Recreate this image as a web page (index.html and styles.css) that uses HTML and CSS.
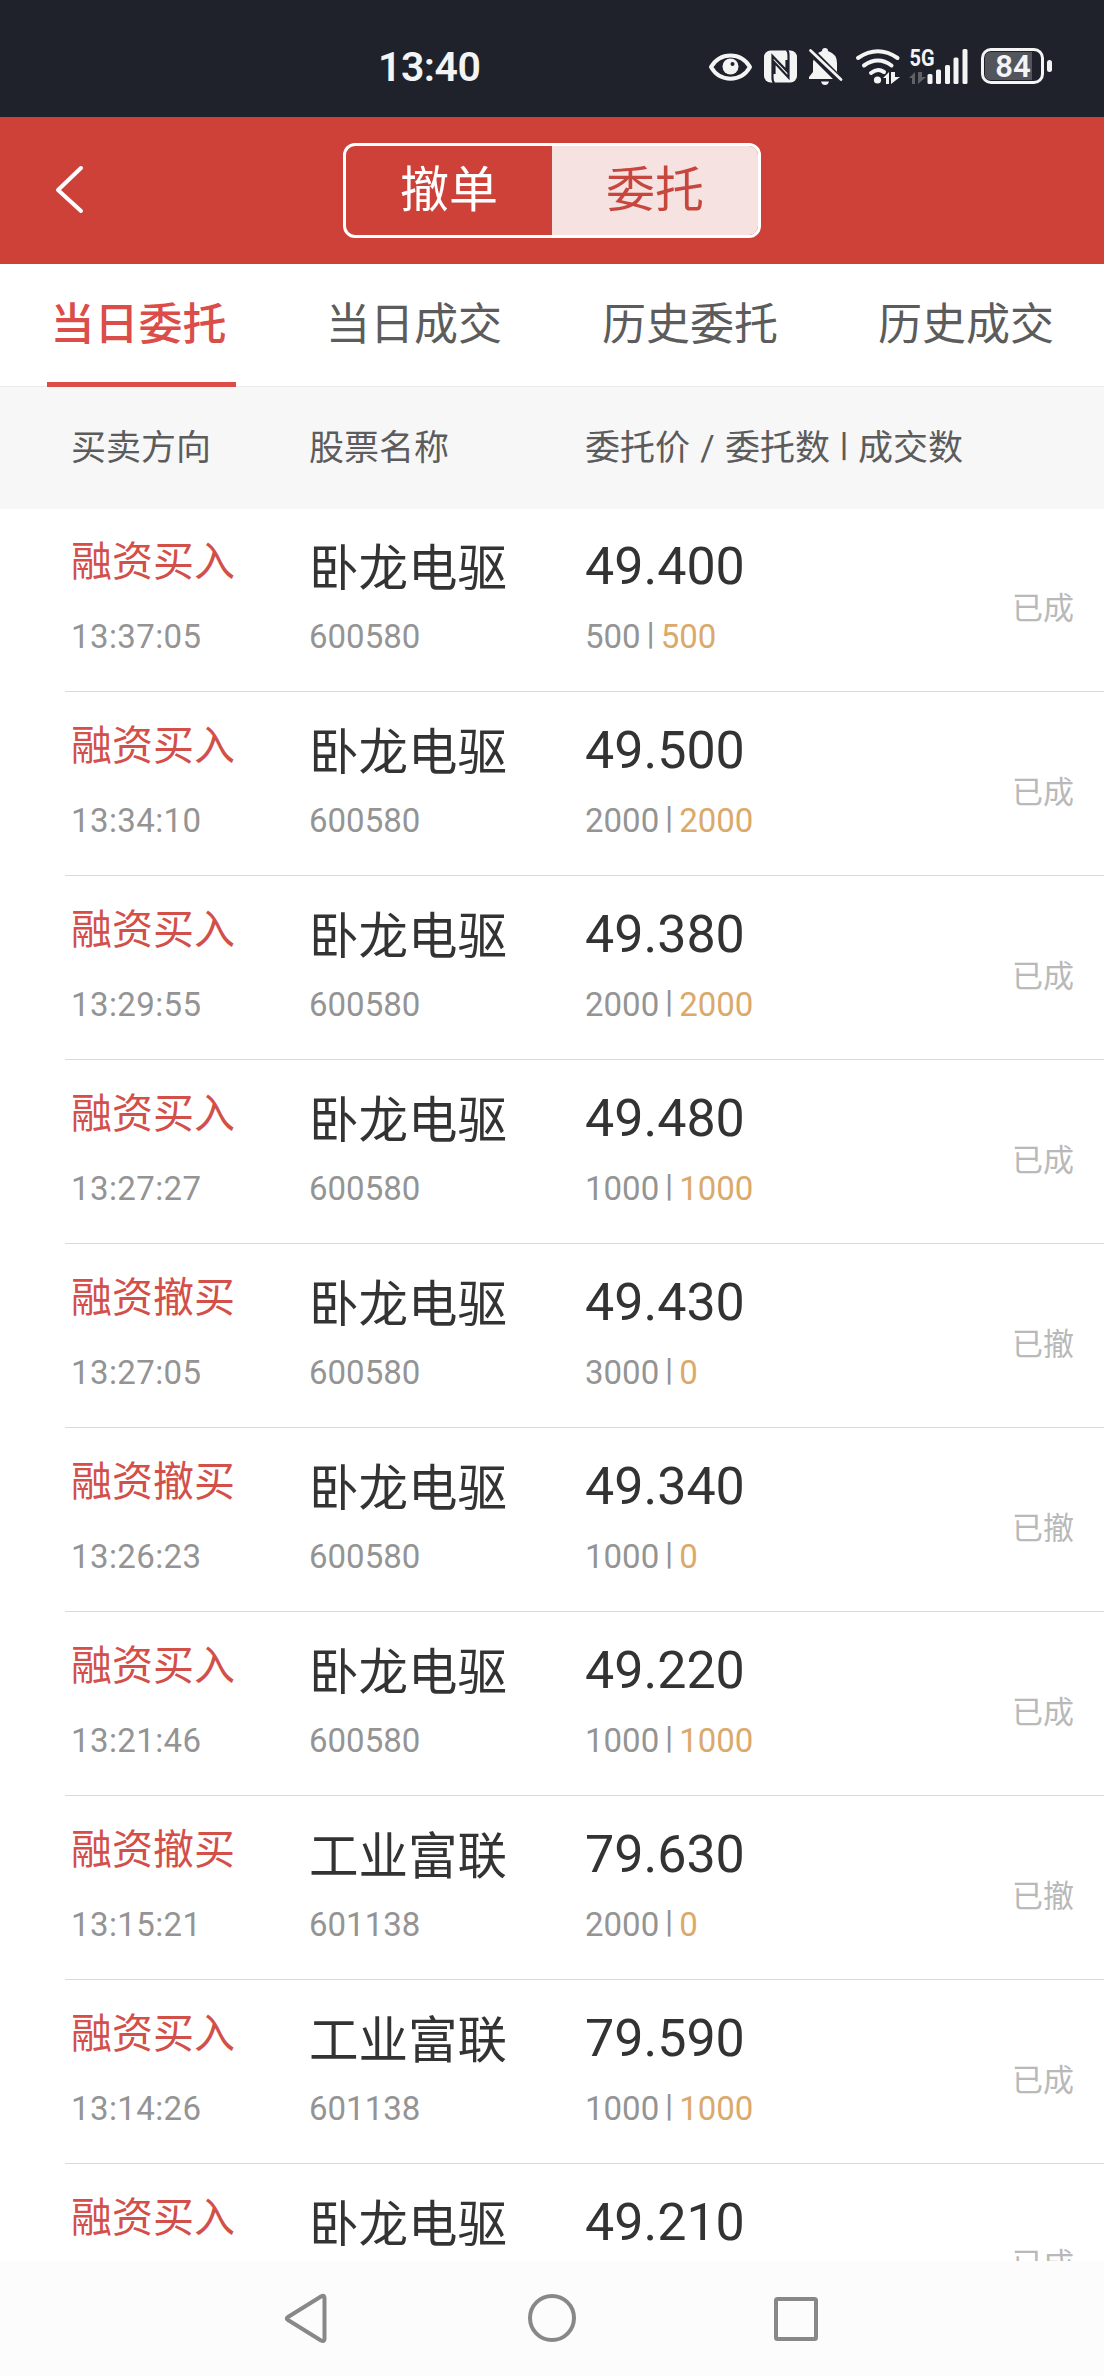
FILE: index.html
```html
<!DOCTYPE html>
<html lang="zh-CN">
<head>
  <meta charset="utf-8">
  <title>当日委托</title>
  <link rel="stylesheet" href="styles.css">
</head>

<body>

<div class="statusBar">
  <div class="clock">13:40</div>
  <div class="statusIcons">
    <svg class="eyeIcon" width="43" height="38" viewBox="0 0 43 38">
      <path d="M2 19C11 3.500 32 3.500 41 19C32 34.500 11 34.500 2 19Z" fill="none" stroke="#f4f4f5" stroke-width="4" stroke-linejoin="round"/>
      <circle cx="21.500" cy="18.500" r="8" fill="#f4f4f5"/>
      <circle cx="23.500" cy="16" r="2" fill="#1f222b"/>
    </svg>
    <svg class="nfcIcon" width="33" height="38" viewBox="0 0 33 38">
      <rect x="0" y="2.500" width="33" height="32" rx="6.500" fill="#f4f4f5"/>
      <path d="M8.500 31V8L22.500 22.500V12M10.500 35Q8.500 34 8.500 30M22.500 2Q24.500 3 24.500 7V29.500L10.500 14.500V26" fill="none" stroke="#1f222b" stroke-width="2.200"/>
    </svg>
    <svg class="bellIcon" width="34" height="38" viewBox="0 0 34 38">
      <path d="M13 3Q13 0 16 0Q19 0 19 3Q28 6 28 15V24L32 30V31H0V29L4 24V14Q5 6 13 3Z" fill="#f4f4f5"/>
      <path d="M12 33.500H20Q19 37 16 37Q13 37 12 33.500Z" fill="#f4f4f5"/>
      <path d="M0 1.500L33 34.500" stroke="#1f222b" stroke-width="8"/>
      <path d="M1.500 2.500L32 31.500" stroke="#f4f4f5" stroke-width="2.800" stroke-linecap="round"/>
    </svg>
    <svg class="wifiIcon" width="44" height="38" viewBox="0 0 44 38">
      <g fill="none" stroke="#f4f4f5" stroke-width="4" stroke-linecap="round">
        <path d="M2 10Q22 -3.500 41.500 10"/>
        <path d="M8 17.500Q22 7.500 35.500 17.500"/>
        <path d="M15 25Q21.500 19.500 28 24"/>
      </g>
      <circle cx="21.500" cy="32" r="3.600" fill="#f4f4f5"/>
      <path d="M27 30L33 24V36H30V30ZM35 24V36L44 29H39V24Z" fill="#f4f4f5"/>
    </svg>
    <svg class="signalIcon" width="59" height="38" viewBox="0 0 59 38">
      <text class="netText" x="0.500" y="18" textLength="25" lengthAdjust="spacingAndGlyphs">5G</text>
      <path d="M0 30L6 24V36H3V30ZM9 24V36L17 29H13V24Z" fill="#5f6167"/>
      <g fill="#f4f4f5">
        <rect x="18.500" y="26" width="5" height="10" rx="1.500"/>
        <rect x="27" y="21.500" width="5" height="14.500" rx="1.500"/>
        <rect x="36" y="17" width="5" height="19" rx="1.500"/>
        <rect x="44.500" y="9.500" width="5" height="26.500" rx="1.500"/>
        <rect x="53.500" y="1" width="5" height="35" rx="1.500"/>
      </g>
    </svg>
    <svg class="batteryIcon" width="71" height="38" viewBox="0 0 71 38">
      <rect x="1.500" y="1.500" width="60" height="33" rx="8.500" fill="none" stroke="#f4f4f5" stroke-width="3"/>
      <path d="M10 4H51V32H10Q4 32 4 26V10Q4 4 10 4Z" fill="#53555c"/>
      <rect x="66" y="12" width="5" height="12" rx="2.500" fill="#f4f4f5"/>
      <text class="batteryText" x="32" y="29" text-anchor="middle">84</text>
    </svg>
  </div>
</div>

<div class="topBar">
  <svg class="backIcon" width="32" height="50" viewBox="0 0 32 50">
    <path d="M27 4L4 26L27 47" fill="none" stroke="#fff" stroke-width="4" stroke-linecap="round" stroke-linejoin="round"/>
  </svg>
  <div class="switch">
    <div class="switchItem">撤单</div>
    <div class="switchItem switchOn">委托</div>
  </div>
</div>

<div class="tabs">
  <div class="tab tabOn">当日委托</div>
  <div class="tab">当日成交</div>
  <div class="tab">历史委托</div>
  <div class="tab">历史成交</div>
</div>

<div class="listHead">
  <div>买卖方向</div>
  <div>股票名称</div>
  <div>委托价<span class="slash">/</span>委托数<span class="headBar">|</span>成交数</div>
</div>

<div class="list">
  <div class="row">
    <div class="cell side"><p>融资买入</p><p class="sub">13:37:05</p></div>
    <div class="cell stock"><p>卧龙电驱</p><p class="sub">600580</p></div>
    <div class="cell price"><p>49.400</p><p class="sub">500<span class="bar">|</span><span class="done">500</span></p></div>
    <div class="state">已成</div>
  </div>
  <div class="row">
    <div class="cell side"><p>融资买入</p><p class="sub">13:34:10</p></div>
    <div class="cell stock"><p>卧龙电驱</p><p class="sub">600580</p></div>
    <div class="cell price"><p>49.500</p><p class="sub">2000<span class="bar">|</span><span class="done">2000</span></p></div>
    <div class="state">已成</div>
  </div>
  <div class="row">
    <div class="cell side"><p>融资买入</p><p class="sub">13:29:55</p></div>
    <div class="cell stock"><p>卧龙电驱</p><p class="sub">600580</p></div>
    <div class="cell price"><p>49.380</p><p class="sub">2000<span class="bar">|</span><span class="done">2000</span></p></div>
    <div class="state">已成</div>
  </div>
  <div class="row">
    <div class="cell side"><p>融资买入</p><p class="sub">13:27:27</p></div>
    <div class="cell stock"><p>卧龙电驱</p><p class="sub">600580</p></div>
    <div class="cell price"><p>49.480</p><p class="sub">1000<span class="bar">|</span><span class="done">1000</span></p></div>
    <div class="state">已成</div>
  </div>
  <div class="row">
    <div class="cell side"><p>融资撤买</p><p class="sub">13:27:05</p></div>
    <div class="cell stock"><p>卧龙电驱</p><p class="sub">600580</p></div>
    <div class="cell price"><p>49.430</p><p class="sub">3000<span class="bar">|</span><span class="done">0</span></p></div>
    <div class="state">已撤</div>
  </div>
  <div class="row">
    <div class="cell side"><p>融资撤买</p><p class="sub">13:26:23</p></div>
    <div class="cell stock"><p>卧龙电驱</p><p class="sub">600580</p></div>
    <div class="cell price"><p>49.340</p><p class="sub">1000<span class="bar">|</span><span class="done">0</span></p></div>
    <div class="state">已撤</div>
  </div>
  <div class="row">
    <div class="cell side"><p>融资买入</p><p class="sub">13:21:46</p></div>
    <div class="cell stock"><p>卧龙电驱</p><p class="sub">600580</p></div>
    <div class="cell price"><p>49.220</p><p class="sub">1000<span class="bar">|</span><span class="done">1000</span></p></div>
    <div class="state">已成</div>
  </div>
  <div class="row">
    <div class="cell side"><p>融资撤买</p><p class="sub">13:15:21</p></div>
    <div class="cell stock"><p>工业富联</p><p class="sub">601138</p></div>
    <div class="cell price"><p>79.630</p><p class="sub">2000<span class="bar">|</span><span class="done">0</span></p></div>
    <div class="state">已撤</div>
  </div>
  <div class="row">
    <div class="cell side"><p>融资买入</p><p class="sub">13:14:26</p></div>
    <div class="cell stock"><p>工业富联</p><p class="sub">601138</p></div>
    <div class="cell price"><p>79.590</p><p class="sub">1000<span class="bar">|</span><span class="done">1000</span></p></div>
    <div class="state">已成</div>
  </div>
  <div class="row">
    <div class="cell side"><p>融资买入</p></div>
    <div class="cell stock"><p>卧龙电驱</p></div>
    <div class="cell price"><p>49.210</p></div>
    <div class="state">已成</div>
  </div>
</div>

<div class="navBar">
  <svg width="48" height="56" viewBox="0 0 48 56">
    <path d="M4 27Q1.500 28.500 4 30L37 50.500Q40.500 52 40.500 49V8Q40.500 4.500 37 6.500Z" fill="none" stroke="#888" stroke-width="4" stroke-linejoin="round"/>
  </svg>
  <svg width="48" height="56" viewBox="0 0 48 56">
    <circle cx="24" cy="28" r="22" fill="none" stroke="#888" stroke-width="4"/>
  </svg>
  <svg width="48" height="56" viewBox="0 0 48 56">
    <rect x="4" y="9" width="40" height="40" rx="1.500" fill="none" stroke="#888" stroke-width="4"/>
  </svg>
</div>

</body>
</html>
```
FILE: styles.css
```css
* {
  box-sizing: border-box;
}

body {
  margin: 0;
  width: 1104px;
  height: 2376px;
  display: flex;
  flex-direction: column;
  overflow: hidden;
  background-color: #fff;
  font-family: Roboto, "Noto Sans CJK SC", sans-serif;
}

p {
  margin: 0;
}

.statusBar {
  height: 117px;
  flex: none;
  display: flex;
  justify-content: space-between;
  padding: 48px 52px 0 378px;
  background-color: #1f222b;
  color: #f4f4f5;
}

.clock {
  font-size: 41px;
  font-weight: 600;
  line-height: 39px;
  letter-spacing: -0.5px;
}

.statusIcons {
  display: flex;
}

.statusIcons svg {
  overflow: visible;
}

.eyeIcon, .nfcIcon {
  margin-right: 12px;
}

.bellIcon {
  margin-right: 13px;
}

.wifiIcon {
  margin-right: 9px;
}

.signalIcon {
  margin-right: 13px;
}

.netText {
  font-size: 23px;
  font-weight: 700;
  fill: #f4f4f5;
}

.batteryText {
  font-size: 31px;
  font-weight: 600;
  fill: #f4f4f5;
}

.topBar {
  height: 147px;
  flex: none;
  display: flex;
  padding: 26px 0 0 54px;
  background-color: #cd4139;
}

.backIcon {
  margin: 21px 257px 0 0;
}

.switch {
  width: 418px;
  height: 95px;
  display: flex;
  border: 3px solid #fff;
  border-radius: 12px;
  overflow: hidden;
}

.switchItem {
  flex: 1;
  font-size: 49px;
  line-height: 89px;
  text-align: center;
  color: #fff;
}

.switchOn {
  background-color: #f6e2e1;
  color: #c7473f;
}

.tabs {
  height: 123px;
  flex: none;
  display: flex;
  border-bottom: 1px solid #ececec;
}

.tab {
  width: 276px;
  height: 124px;
  padding: 0 47px;
  font-size: 44px;
  line-height: 122px;
  text-align: center;
  white-space: nowrap;
  color: #5c5c5c;
}

.tabOn {
  width: 189px;
  margin: 0 40px 0 47px;
  padding: 0 6px 0 0;
  font-weight: 500;
  color: #db4d48;
  border-bottom: 6px solid #db4d48;
}

.listHead {
  height: 121px;
  flex: none;
  display: grid;
  grid-template-columns: 238px 276px 1fr;
  padding-left: 71px;
  font-size: 35px;
  line-height: 123px;
  color: #5c5c5c;
  background-color: #f7f7f7;
  box-shadow: 0 1px #f7f7f7;
}

.slash, .headBar {
  display: inline-block;
  width: 35px;
  text-align: center;
}

.headBar {
  width: 28px;
  font-size: 34px;
  font-weight: 600;
  line-height: 1;
  vertical-align: 4px;
}

.list {
  flex: 1;
  min-height: 0;
  padding-left: 65px;
  overflow: hidden;
}

.row {
  height: 184px;
  display: grid;
  grid-template-columns: 238px 276px 1fr 92px;
  grid-template-rows: 183px;
  padding-left: 6px;
  border-bottom: 1px solid #dadada;
}

.cell {
  display: flex;
  flex-direction: column;
  justify-content: space-between;
  padding-bottom: 34px;
  line-height: 60px;
  color: #333;
}

.side {
  padding-top: 24px;
  font-size: 41px;
  color: #d34f49;
}

.side .sub {
  letter-spacing: 0.4px;
}

.stock {
  padding-top: 31px;
  font-size: 49.500px;
}

.price {
  padding-top: 29px;
  font-size: 52px;
}

.sub {
  font-size: 33px;
  line-height: 40px;
  color: #949494;
}

.bar {
  display: inline-block;
  width: 20px;
  font-size: 31px;
  font-weight: 500;
  line-height: 1;
  text-align: center;
  vertical-align: 4px;
}

.done {
  color: #dba96b;
}

.state {
  font-size: 31px;
  line-height: 202px;
  color: #b9b9b9;
}

.navBar {
  height: 115px;
  flex: none;
  display: flex;
  justify-content: center;
  gap: 196px;
  padding-top: 29px;
  background-color: #fcfcfc;
}
```
